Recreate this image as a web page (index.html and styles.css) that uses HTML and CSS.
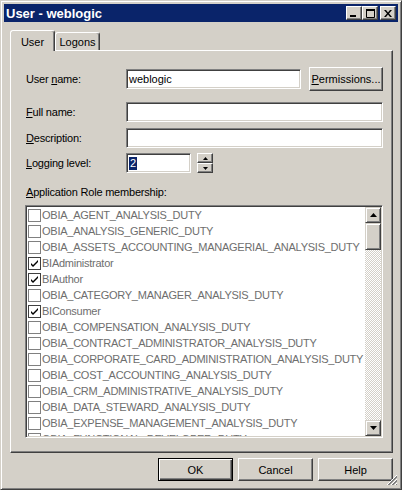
FILE: index.html
```html
<!DOCTYPE html>
<html>
<head>
<meta charset="utf-8">
<link rel="stylesheet" href="styles.css">
</head>
<body>
<div class="window">
  <div class="titlebar">
    <span class="title">User - weblogic</span>
    <div class="caption-btns">
      <span class="cbtn"><svg width="8" height="7" viewBox="0 0 8 7"><rect x="0" y="5" width="6" height="2" fill="#000"/></svg></span>
      <span class="cbtn"><svg width="9" height="9" viewBox="0 0 9 9"><path d="M0.5 1.5h8v7h-8z" fill="none" stroke="#000"/><rect x="0" y="0" width="9" height="2" fill="#000"/></svg></span>
      <span class="cbtn close"><svg width="8" height="7" viewBox="0 0 8 7"><path d="M0 0h2l2 2.5l2-2.5h2l-3 3.5l3 3.5h-2l-2-2.5l-2 2.5h-2l3-3.5z" fill="#000"/></svg></span>
    </div>
  </div>

  <div class="tabs">
    <div class="tab active">User</div>
    <div class="tab">Logons</div>
  </div>

  <div class="panel">
    <div class="row r1">
      <span class="lbl">User <u>n</u>ame:</span>
      <div class="field f-user">weblogic</div>
      <div class="btn perm"><span><u>P</u>ermissions...</span></div>
    </div>
    <div class="row r2">
      <span class="lbl"><u>F</u>ull name:</span>
      <div class="field f-wide"></div>
    </div>
    <div class="row r3">
      <span class="lbl"><u>D</u>escription:</span>
      <div class="field f-wide"></div>
    </div>
    <div class="row r4">
      <span class="lbl"><u>L</u>ogging level:</span>
      <div class="field f-level"><span class="sel">2</span></div>
      <div class="spin">
        <div class="spin-btn"><svg width="5" height="3" viewBox="0 0 5 3"><path d="M2.5 0L5 3H0z" fill="#000"/></svg></div>
        <div class="spin-btn"><svg width="5" height="3" viewBox="0 0 5 3"><path d="M0 0h5L2.5 3z" fill="#000"/></svg></div>
      </div>
    </div>
    <div class="section-lbl"><u>A</u>pplication Role membership:</div>
    <div class="listbox">
      <div class="items">
        <div class="item"><span class="cb"></span>OBIA_AGENT_ANALYSIS_DUTY</div>
        <div class="item"><span class="cb"></span>OBIA_ANALYSIS_GENERIC_DUTY</div>
        <div class="item"><span class="cb"></span>OBIA_ASSETS_ACCOUNTING_MANAGERIAL_ANALYSIS_DUTY</div>
        <div class="item"><span class="cb on"><svg width="9" height="9" viewBox="0 0 9 9"><path d="M1 4l2 2l5-5v2l-5 5l-2-2z" fill="#000"/></svg></span>BIAdministrator</div>
        <div class="item"><span class="cb on"><svg width="9" height="9" viewBox="0 0 9 9"><path d="M1 4l2 2l5-5v2l-5 5l-2-2z" fill="#000"/></svg></span>BIAuthor</div>
        <div class="item"><span class="cb"></span>OBIA_CATEGORY_MANAGER_ANALYSIS_DUTY</div>
        <div class="item"><span class="cb on"><svg width="9" height="9" viewBox="0 0 9 9"><path d="M1 4l2 2l5-5v2l-5 5l-2-2z" fill="#000"/></svg></span>BIConsumer</div>
        <div class="item"><span class="cb"></span>OBIA_COMPENSATION_ANALYSIS_DUTY</div>
        <div class="item"><span class="cb"></span>OBIA_CONTRACT_ADMINISTRATOR_ANALYSIS_DUTY</div>
        <div class="item"><span class="cb"></span>OBIA_CORPORATE_CARD_ADMINISTRATION_ANALYSIS_DUTY</div>
        <div class="item"><span class="cb"></span>OBIA_COST_ACCOUNTING_ANALYSIS_DUTY</div>
        <div class="item"><span class="cb"></span>OBIA_CRM_ADMINISTRATIVE_ANALYSIS_DUTY</div>
        <div class="item"><span class="cb"></span>OBIA_DATA_STEWARD_ANALYSIS_DUTY</div>
        <div class="item"><span class="cb"></span>OBIA_EXPENSE_MANAGEMENT_ANALYSIS_DUTY</div>
        <div class="item"><span class="cb"></span>OBIA_FUNCTIONAL_DEVELOPER_DUTY</div>
      </div>
      <div class="scrollbar">
        <div class="sb-btn"><svg width="7" height="4" viewBox="0 0 7 4"><path d="M3.5 0L7 4H0z" fill="#000"/></svg></div>
        <div class="sb-thumb"></div>
        <div class="sb-track"></div>
        <div class="sb-btn"><svg width="7" height="4" viewBox="0 0 7 4"><path d="M0 0h7L3.5 4z" fill="#000"/></svg></div>
      </div>
    </div>
  </div>

  <div class="buttons">
    <div class="btn dlg default"><span>OK</span></div>
    <div class="btn dlg"><span>Cancel</span></div>
    <div class="btn dlg"><span>Help</span></div>
  </div>

  <svg class="grip" width="12" height="12" viewBox="0 0 12 12">
    <path d="M11 1L1 11M11 5L5 11M11 9L9 11" stroke="#fff" stroke-width="1"/>
    <path d="M11 2L2 11M11 3L3 11M11 6L6 11M11 7L7 11M11 10L10 11" stroke="#808080" stroke-width="1"/>
  </svg>
</div>
</body>
</html>
```

FILE: styles.css
```css
* { box-sizing: border-box; }
html, body { margin: 0; padding: 0; background: #d4d0c8; }
body {
  font-family: "Liberation Sans", Arial, sans-serif;
  font-size: 11px;
  color: #000;
}
u { text-decoration: underline; text-underline-offset: 1px; }

.window {
  position: relative;
  width: 402px;
  height: 490px;
  background: #d4d0c8;
  border: 1px solid;
  border-color: #d4d0c8 #404040 #404040 #d4d0c8;
  box-shadow: inset 1px 1px #fff, inset -1px -1px #808080;
  padding: 3px;
  display: flex;
  flex-direction: column;
}

.titlebar {
  height: 18px;
  background: #0a246a;
  display: flex;
  align-items: center;
  padding: 0 2px 0 2px;
}
.title {
  color: #fff;
  font-weight: bold;
  font-size: 13px;
  flex: 1;
}
.caption-btns { display: flex; align-items: center; }
.cbtn {
  width: 16px;
  height: 14px;
  background: #d4d0c8;
  border: 1px solid;
  border-color: #fff #404040 #404040 #fff;
  box-shadow: inset -1px -1px #808080;
  display: flex;
  align-items: center;
  justify-content: center;
}
.cbtn.close { margin-left: 2px; }

.tabs {
  display: flex;
  align-items: flex-end;
  margin: 8px 0 0 6px;
  height: 20px;
}
.tab {
  height: 18px;
  width: 45px;
  border: 1px solid;
  border-bottom: none;
  border-color: #fff #404040 transparent #fff;
  box-shadow: inset -1px 0 #808080;
  border-radius: 3px 3px 0 0;
  display: flex;
  align-items: center;
  justify-content: center;
  background: #d4d0c8;
}
.tab.active {
  height: 21px;
  margin-bottom: -1px;
  position: relative;
  z-index: 1;
  padding-bottom: 1px;
  padding-top: 2px;
}

.panel {
  margin: 0 5px 0 6px;
  height: 403px;
  border: 1px solid;
  border-color: #fff #404040 #404040 #fff;
  box-shadow: inset -1px -1px #808080;
  padding: 0 0 0 15px;
  display: flex;
  flex-direction: column;
}

.row { display: flex; align-items: center; }
.r1 { margin-top: 16px; height: 24px; }
.r2 { margin-top: 11px; height: 20px; }
.r3 { margin-top: 6px; height: 20px; }
.r4 { margin-top: 5px; height: 20px; }
.lbl { width: 100px; flex: none; letter-spacing: -0.2px; }

.field {
  height: 20px;
  background: #fff;
  border: 1px solid;
  border-color: #808080 #fff #fff #808080;
  box-shadow: inset 1px 1px #404040, inset -1px -1px #d4d0c8;
  padding: 0 0 0 2px;
  display: flex;
  align-items: center;
}
.f-user { width: 175px; }
.f-wide { width: 257px; }
.f-level { width: 65px; }
.sel { background: #0a246a; color: #fff; padding: 0 1px; line-height: 13px; }

.btn {
  background: #d4d0c8;
  border: 1px solid;
  border-color: #fff #404040 #404040 #fff;
  box-shadow: inset -1px -1px #808080;
  display: flex;
  align-items: center;
  justify-content: center;
}
.perm { width: 74px; height: 24px; margin-left: 8px; }

.spin { margin-left: 6px; display: flex; flex-direction: column; width: 16px; height: 20px; }
.spin-btn {
  height: 10px;
  background: #d4d0c8;
  border: 1px solid;
  border-color: #fff #404040 #404040 #fff;
  box-shadow: inset -1px -1px #808080;
  display: flex;
  align-items: center;
  justify-content: center;
}

.section-lbl { margin-top: 13px; height: 13px; line-height: 13px; letter-spacing: -0.2px; }

.listbox {
  margin-top: 6px;
  margin-left: -1px;
  width: 358px;
  height: 233px;
  background: #fff;
  border: 1px solid;
  border-color: #808080 #fff #fff #808080;
  box-shadow: inset 1px 1px #404040, inset -1px -1px #d4d0c8;
  padding: 1px;
  display: flex;
}
.items {
  flex: 1;
  overflow: hidden;
  padding-left: 1px;
}
.item {
  height: 16px;
  display: flex;
  align-items: center;
  white-space: nowrap;
  color: #6e6e6e;
  font-size: 11px;
  letter-spacing: -0.25px;
}
.cb {
  width: 13px;
  height: 13px;
  flex: none;
  border: 1px solid #808080;
  background: #fff;
  margin-right: 1px;
  display: flex;
  align-items: center;
  justify-content: center;
}
.cb.on { border-color: #404040; }

.scrollbar {
  width: 16px;
  flex: none;
  display: flex;
  flex-direction: column;
}
.sb-btn {
  height: 16px;
  background: #d4d0c8;
  border: 1px solid;
  border-color: #d4d0c8 #404040 #404040 #d4d0c8;
  box-shadow: inset 1px 1px #fff, inset -1px -1px #808080;
  display: flex;
  align-items: center;
  justify-content: center;
}
.sb-thumb {
  height: 27px;
  background: #d4d0c8;
  border: 1px solid;
  border-color: #d4d0c8 #404040 #404040 #d4d0c8;
  box-shadow: inset 1px 1px #fff, inset -1px -1px #808080;
}
.sb-track {
  flex: 1;
  background-color: #fff;
  background-image: conic-gradient(#fff 25%, #d4d0c8 0 50%, #fff 0 75%, #d4d0c8 0);
  background-size: 2px 2px;
}

.buttons {
  display: flex;
  justify-content: flex-end;
  gap: 5px;
  margin: 5px 5px 0 0;
}
.dlg { width: 75px; height: 23px; }
.dlg.default {
  border: 1px solid #000;
  box-shadow: inset 1px 1px #fff, inset -1px -1px #404040, inset -2px -2px #808080;
}
.grip { position: absolute; right: 3px; bottom: 3px; }
```
